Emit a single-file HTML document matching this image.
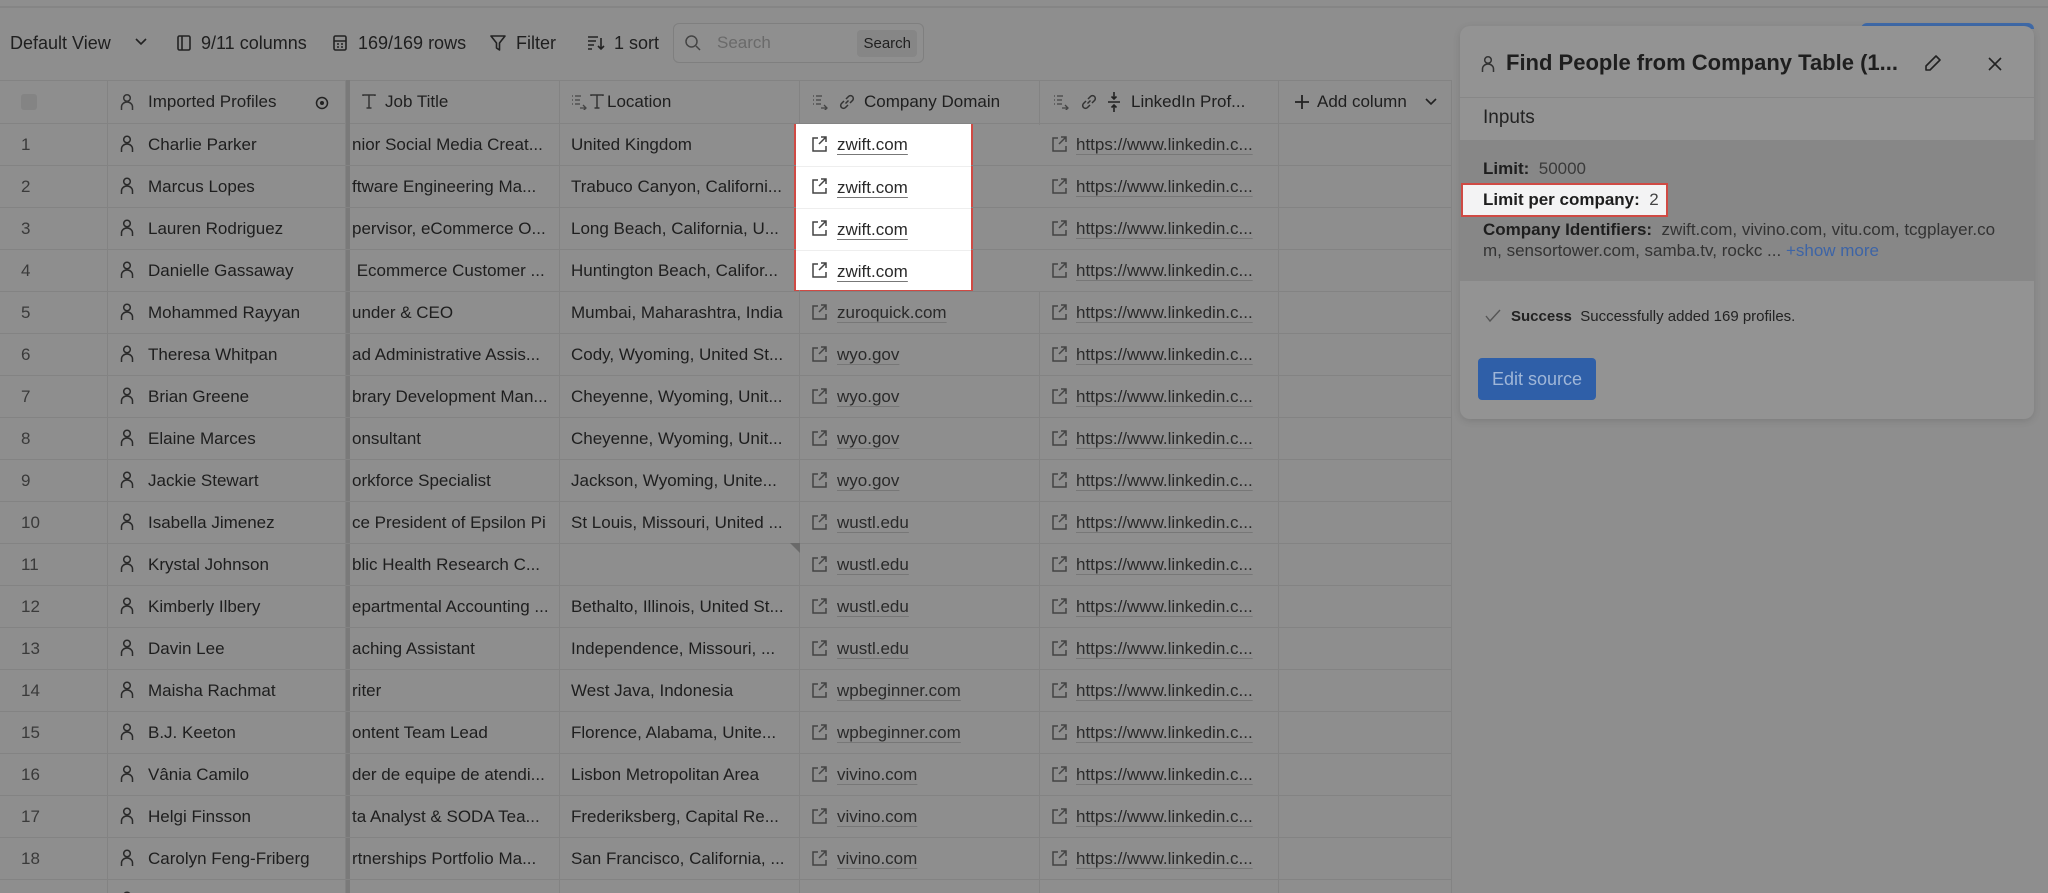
<!DOCTYPE html>
<html><head><meta charset="utf-8"><style>
*{box-sizing:border-box;margin:0;padding:0}
html,body{width:2048px;height:893px;overflow:hidden;background:#8e8e8e}
body{font-family:"Liberation Sans",sans-serif;color:#1e1e1e}
#wrap{position:relative;width:2048px;height:893px;overflow:hidden;background:#8e8e8e}
.abs{position:absolute}
.topline{left:0;top:6px;width:2048px;height:2px;background:#858585}
.tb{top:31px;height:24px;font-size:18px;display:flex;align-items:center;gap:8px;color:#1f1f1f}
.search{left:673px;top:23px;width:251px;height:40px;border:1px solid #7f7f7f;border-radius:6px;background:#8f8f8f}
.search .b{position:absolute;right:6px;top:6px;height:27px;padding:0 6px;background:#868686;border-radius:4px;font-size:15px;line-height:27px;color:#1f1f1f}
.row{position:absolute;left:0;width:1452px;height:42px;border-bottom:1px solid #838383;font-size:17px;white-space:nowrap}
.row>div{position:absolute;top:0;height:42px;line-height:41px;overflow:hidden;border-right:1px solid #838383}
.c0{left:0;width:108px;padding-left:21px;color:#3a3a3a}
.c1{left:108px;width:238px;padding-left:40px}
.c2{left:350px;width:210px;padding-left:2px}
.c3{left:560px;width:240px;padding-left:11px}
.c4{left:800px;width:240px;padding-left:37px}
.c5{left:1040px;width:239px;padding-left:36px}
.c6{left:1279px;width:173px}
.frz{left:346px;top:80px;width:4px;height:813px;background:#7a7a7a}
.lk{color:#2a2a2a;text-decoration:underline;text-decoration-color:#777;text-underline-offset:4px}
svg{position:absolute}
.hdr{font-size:17px;color:#1f1f1f}
.hl{left:794px;top:124px;width:179px;height:168px;background:#fff;border:2px solid #cf4a44}
.panel{left:1460px;top:26px;width:574px;height:393px;background:#939393;border-radius:10px;box-shadow:0 2px 8px rgba(0,0,0,.12)}
</style></head><body><div id="wrap">
<div class="abs topline"></div>
<div class="abs" style="left:1861px;top:23px;width:173px;height:6px;background:#3f6aa8;border-radius:6px 6px 0 0"></div>

<div class="abs tb" style="left:10px">Default View</div>
<svg style="left:134px;top:37px" width="14" height="10" viewBox="0 0 14 10"><path d="M2 2l5 5 5-5" fill="none" stroke="#222" stroke-width="1.6"/></svg>
<svg style="left:177px;top:35px" width="14" height="16" viewBox="0 0 14 16"><rect x="1" y="1" width="12" height="14" rx="1.5" fill="none" stroke="#222" stroke-width="1.6"/><path d="M5 1v14" stroke="#222" stroke-width="1.6"/></svg>
<div class="abs tb" style="left:201px">9/11 columns</div>
<svg style="left:333px;top:35px" width="14" height="16" viewBox="0 0 14 16"><rect x="1" y="1" width="12" height="14" rx="1.5" fill="none" stroke="#222" stroke-width="1.6"/><path d="M1 6h12M4 9h2M8 9h2M4 12h2M8 12h2" stroke="#222" stroke-width="1.6"/></svg>
<div class="abs tb" style="left:358px">169/169 rows</div>
<svg style="left:490px;top:35px" width="16" height="17" viewBox="0 0 16 17"><path d="M1 1h14l-5.5 7v7l-3-2V8z" fill="none" stroke="#222" stroke-width="1.6" stroke-linejoin="round"/></svg>
<div class="abs tb" style="left:516px">Filter</div>
<svg style="left:587px;top:35px" width="18" height="16" viewBox="0 0 18 16"><path d="M1 2h10M1 6h8M1 10h6M1 14h4M14 3v11M11 11l3 3 3-3" fill="none" stroke="#222" stroke-width="1.6"/></svg>
<div class="abs tb" style="left:614px">1 sort</div>
<div class="abs search"><svg style="left:10px;top:10px" width="18" height="18" viewBox="0 0 18 18"><circle cx="7.5" cy="7.5" r="5.5" fill="none" stroke="#444" stroke-width="1.5"/><path d="M12 12l4 4" stroke="#444" stroke-width="1.5"/></svg><span style="position:absolute;left:43px;top:9px;font-size:17px;color:#6a6a6a">Search</span><span class="b">Search</span></div>

<div class="row" style="top:80px;height:44px;border-top:1px solid #838383">
<div class="c0" style="height:44px"><span style="display:inline-block;width:16px;height:16px;background:#848484;border-radius:3px;margin-top:13px"></span></div>
<div class="c1 hdr" style="height:44px">Imported Profiles<svg style="left:207px;top:15px" width="14" height="14" viewBox="0 0 14 14"><circle cx="7" cy="7" r="5.5" fill="none" stroke="#222" stroke-width="1.5"/><circle cx="7" cy="7" r="2" fill="#222"/></svg></div>
<div class="c2 hdr" style="height:44px;padding-left:35px">Job Title</div>
<div class="c3 hdr" style="height:44px;padding-left:47px">Location</div>
<div class="c4 hdr" style="height:44px;padding-left:64px">Company Domain</div>
<div class="c5 hdr" style="height:44px;padding-left:91px">LinkedIn Prof...</div>
<div class="c6 hdr" style="height:44px;padding-left:38px">Add column</div>
</div>
<svg style="left:120px;top:93px" width="14" height="18" viewBox="0 0 14 18"><circle cx="7" cy="5" r="3.3" fill="none" stroke="#333" stroke-width="1.5"/><path d="M1.5 17v-3a5.5 5 0 0 1 11 0v3" fill="none" stroke="#333" stroke-width="1.5"/></svg>
<svg style="left:362px;top:94px" width="14" height="15" viewBox="0 0 14 15"><path d="M1 2V1h12v1M7 1v13M4.5 14h5" fill="none" stroke="#333" stroke-width="1.5"/></svg>
<svg style="left:571px;top:94px" width="16" height="16" viewBox="0 0 16 16"><path d="M1 2h1M1 6h1M1 10h1M4 2h6M4 6h5M4 10h5M9 14h6M12 11l3 3-3 3" fill="none" stroke="#444" stroke-width="1.3"/></svg>
<svg style="left:590px;top:94px" width="14" height="15" viewBox="0 0 14 15"><path d="M1 2V1h12v1M7 1v13M4.5 14h5" fill="none" stroke="#333" stroke-width="1.5"/></svg>
<svg style="left:812px;top:94px" width="16" height="16" viewBox="0 0 16 16"><path d="M1 2h1M1 6h1M1 10h1M4 2h6M4 6h5M4 10h5M9 14h6M12 11l3 3-3 3" fill="none" stroke="#444" stroke-width="1.3"/></svg>
<svg style="left:838px;top:93px" width="18" height="18" viewBox="0 0 18 18"><path d="M7.5 10.5l3-3M6 8l-2.5 2.5a2.8 2.8 0 0 0 4 4L10 12M12 10l2.5-2.5a2.8 2.8 0 0 0-4-4L8 6" fill="none" stroke="#333" stroke-width="1.5"/></svg>
<svg style="left:1053px;top:94px" width="16" height="16" viewBox="0 0 16 16"><path d="M1 2h1M1 6h1M1 10h1M4 2h6M4 6h5M4 10h5M9 14h6M12 11l3 3-3 3" fill="none" stroke="#444" stroke-width="1.3"/></svg>
<svg style="left:1080px;top:93px" width="18" height="18" viewBox="0 0 18 18"><path d="M7.5 10.5l3-3M6 8l-2.5 2.5a2.8 2.8 0 0 0 4 4L10 12M12 10l2.5-2.5a2.8 2.8 0 0 0-4-4L8 6" fill="none" stroke="#333" stroke-width="1.5"/></svg>
<svg style="left:1107px;top:91px" width="14" height="22" viewBox="0 0 14 22"><path d="M1 11h12M7 1v7M4.5 5.5L7 8l2.5-2.5M7 21v-7M4.5 16.5L7 14l2.5 2.5" fill="none" stroke="#222" stroke-width="1.6"/></svg>
<svg style="left:1294px;top:94px" width="16" height="16" viewBox="0 0 16 16"><path d="M8 1v14M1 8h14" stroke="#222" stroke-width="1.8"/></svg>
<svg style="left:1424px;top:97px" width="14" height="10" viewBox="0 0 14 10"><path d="M2 2l5 5 5-5" fill="none" stroke="#222" stroke-width="1.6"/></svg>

<div class="abs hl"></div>
<div class="abs frz"></div>

<div class="row" style="top:124px"><div class="c0">1</div><div class="c1">Charlie Parker</div><div class="c2">nior Social Media Creat...</div><div class="c3">United Kingdom</div><div class="c4" style="background:#fff;border-right:none;left:796px;width:175px;padding-left:41px"><span class="lk">zwift.com</span></div><div class="c5"><span class="lk">https://www.linkedin.c...</span></div><div class="c6"></div></div>
<div class="row" style="top:166px"><div class="c0">2</div><div class="c1">Marcus Lopes</div><div class="c2">ftware Engineering Ma...</div><div class="c3">Trabuco Canyon, Californi...</div><div class="c4" style="background:#fff;border-right:none;left:796px;width:175px;padding-left:41px;border-top:1px solid #eee"><span class="lk">zwift.com</span></div><div class="c5"><span class="lk">https://www.linkedin.c...</span></div><div class="c6"></div></div>
<div class="row" style="top:208px"><div class="c0">3</div><div class="c1">Lauren Rodriguez</div><div class="c2">pervisor, eCommerce O...</div><div class="c3">Long Beach, California, U...</div><div class="c4" style="background:#fff;border-right:none;left:796px;width:175px;padding-left:41px;border-top:1px solid #eee"><span class="lk">zwift.com</span></div><div class="c5"><span class="lk">https://www.linkedin.c...</span></div><div class="c6"></div></div>
<div class="row" style="top:250px"><div class="c0">4</div><div class="c1">Danielle Gassaway</div><div class="c2">&nbsp;Ecommerce Customer ...</div><div class="c3">Huntington Beach, Califor...</div><div class="c4" style="background:#fff;border-right:none;left:796px;width:175px;padding-left:41px;height:40px;border-top:1px solid #eee"><span class="lk">zwift.com</span></div><div class="c5"><span class="lk">https://www.linkedin.c...</span></div><div class="c6"></div></div>
<div class="row" style="top:292px"><div class="c0">5</div><div class="c1">Mohammed Rayyan</div><div class="c2">under &amp; CEO</div><div class="c3">Mumbai, Maharashtra, India</div><div class="c4"><span class="lk">zuroquick.com</span></div><div class="c5"><span class="lk">https://www.linkedin.c...</span></div><div class="c6"></div></div>
<div class="row" style="top:334px"><div class="c0">6</div><div class="c1">Theresa Whitpan</div><div class="c2">ad Administrative Assis...</div><div class="c3">Cody, Wyoming, United St...</div><div class="c4"><span class="lk">wyo.gov</span></div><div class="c5"><span class="lk">https://www.linkedin.c...</span></div><div class="c6"></div></div>
<div class="row" style="top:376px"><div class="c0">7</div><div class="c1">Brian Greene</div><div class="c2">brary Development Man...</div><div class="c3">Cheyenne, Wyoming, Unit...</div><div class="c4"><span class="lk">wyo.gov</span></div><div class="c5"><span class="lk">https://www.linkedin.c...</span></div><div class="c6"></div></div>
<div class="row" style="top:418px"><div class="c0">8</div><div class="c1">Elaine Marces</div><div class="c2">onsultant</div><div class="c3">Cheyenne, Wyoming, Unit...</div><div class="c4"><span class="lk">wyo.gov</span></div><div class="c5"><span class="lk">https://www.linkedin.c...</span></div><div class="c6"></div></div>
<div class="row" style="top:460px"><div class="c0">9</div><div class="c1">Jackie Stewart</div><div class="c2">orkforce Specialist</div><div class="c3">Jackson, Wyoming, Unite...</div><div class="c4"><span class="lk">wyo.gov</span></div><div class="c5"><span class="lk">https://www.linkedin.c...</span></div><div class="c6"></div></div>
<div class="row" style="top:502px"><div class="c0">10</div><div class="c1">Isabella Jimenez</div><div class="c2">ce President of Epsilon Pi</div><div class="c3">St Louis, Missouri, United ...</div><div class="c4"><span class="lk">wustl.edu</span></div><div class="c5"><span class="lk">https://www.linkedin.c...</span></div><div class="c6"></div></div>
<div class="row" style="top:544px"><div class="c0">11</div><div class="c1">Krystal Johnson</div><div class="c2">blic Health Research C...</div><div class="c3"></div><div class="c4"><span class="lk">wustl.edu</span></div><div class="c5"><span class="lk">https://www.linkedin.c...</span></div><div class="c6"></div></div>
<div class="row" style="top:586px"><div class="c0">12</div><div class="c1">Kimberly Ilbery</div><div class="c2">epartmental Accounting ...</div><div class="c3">Bethalto, Illinois, United St...</div><div class="c4"><span class="lk">wustl.edu</span></div><div class="c5"><span class="lk">https://www.linkedin.c...</span></div><div class="c6"></div></div>
<div class="row" style="top:628px"><div class="c0">13</div><div class="c1">Davin Lee</div><div class="c2">aching Assistant</div><div class="c3">Independence, Missouri, ...</div><div class="c4"><span class="lk">wustl.edu</span></div><div class="c5"><span class="lk">https://www.linkedin.c...</span></div><div class="c6"></div></div>
<div class="row" style="top:670px"><div class="c0">14</div><div class="c1">Maisha Rachmat</div><div class="c2">riter</div><div class="c3">West Java, Indonesia</div><div class="c4"><span class="lk">wpbeginner.com</span></div><div class="c5"><span class="lk">https://www.linkedin.c...</span></div><div class="c6"></div></div>
<div class="row" style="top:712px"><div class="c0">15</div><div class="c1">B.J. Keeton</div><div class="c2">ontent Team Lead</div><div class="c3">Florence, Alabama, Unite...</div><div class="c4"><span class="lk">wpbeginner.com</span></div><div class="c5"><span class="lk">https://www.linkedin.c...</span></div><div class="c6"></div></div>
<div class="row" style="top:754px"><div class="c0">16</div><div class="c1">Vânia Camilo</div><div class="c2">der de equipe de atendi...</div><div class="c3">Lisbon Metropolitan Area</div><div class="c4"><span class="lk">vivino.com</span></div><div class="c5"><span class="lk">https://www.linkedin.c...</span></div><div class="c6"></div></div>
<div class="row" style="top:796px"><div class="c0">17</div><div class="c1">Helgi Finsson</div><div class="c2">ta Analyst &amp; SODA Tea...</div><div class="c3">Frederiksberg, Capital Re...</div><div class="c4"><span class="lk">vivino.com</span></div><div class="c5"><span class="lk">https://www.linkedin.c...</span></div><div class="c6"></div></div>
<div class="row" style="top:838px"><div class="c0">18</div><div class="c1">Carolyn Feng-Friberg</div><div class="c2">rtnerships Portfolio Ma...</div><div class="c3">San Francisco, California, ...</div><div class="c4"><span class="lk">vivino.com</span></div><div class="c5"><span class="lk">https://www.linkedin.c...</span></div><div class="c6"></div></div>
<div class="row" style="top:880px"><div class="c0"></div><div class="c1"></div><div class="c2"></div><div class="c3"></div><div class="c4"></div><div class="c5"></div><div class="c6"></div></div>

<svg style="left:120px;top:135px;overflow:visible" width="14" height="800" viewBox="0 0 14 800">
<g fill="none" stroke="#2a2a2a" stroke-width="1.5">
<g id="p"><circle cx="7" cy="4.5" r="3.3"/><path d="M1.5 17v-3a5.5 5 0 0 1 11 0v3"/></g>
<use href="#p" y="42"/><use href="#p" y="84"/><use href="#p" y="126"/><use href="#p" y="168"/><use href="#p" y="210"/><use href="#p" y="252"/><use href="#p" y="294"/><use href="#p" y="336"/><use href="#p" y="378"/><use href="#p" y="420"/><use href="#p" y="462"/><use href="#p" y="504"/><use href="#p" y="546"/><use href="#p" y="588"/><use href="#p" y="630"/><use href="#p" y="672"/><use href="#p" y="714"/><use href="#p" y="756"/>
</g></svg>
<svg style="left:811px;top:136px;overflow:visible" width="16" height="760" viewBox="0 0 16 760">
<g fill="none" stroke="#444" stroke-width="1.5">
<g id="e"><path d="M7 2H2v13h13v-5M10 1h5v5M15 1L8 8"/></g>
<use href="#e" y="42"/><use href="#e" y="84"/><use href="#e" y="126"/><use href="#e" y="168"/><use href="#e" y="210"/><use href="#e" y="252"/><use href="#e" y="294"/><use href="#e" y="336"/><use href="#e" y="378"/><use href="#e" y="420"/><use href="#e" y="462"/><use href="#e" y="504"/><use href="#e" y="546"/><use href="#e" y="588"/><use href="#e" y="630"/><use href="#e" y="672"/><use href="#e" y="714"/>
</g></svg>
<svg style="left:1051px;top:136px;overflow:visible" width="16" height="760" viewBox="0 0 16 760">
<g fill="none" stroke="#444" stroke-width="1.5">
<use href="#e"/><use href="#e" y="42"/><use href="#e" y="84"/><use href="#e" y="126"/><use href="#e" y="168"/><use href="#e" y="210"/><use href="#e" y="252"/><use href="#e" y="294"/><use href="#e" y="336"/><use href="#e" y="378"/><use href="#e" y="420"/><use href="#e" y="462"/><use href="#e" y="504"/><use href="#e" y="546"/><use href="#e" y="588"/><use href="#e" y="630"/><use href="#e" y="672"/><use href="#e" y="714"/>
</g></svg>
<svg style="left:790px;top:543px" width="10" height="10"><path d="M0 0h10v10z" fill="#6a6a6a"/></svg>

<div class="abs panel">
 <svg style="left:21px;top:29px" width="14" height="18" viewBox="0 0 14 18"><circle cx="7" cy="5" r="3.3" fill="none" stroke="#333" stroke-width="1.5"/><path d="M1.5 17v-3a5.5 5 0 0 1 11 0v3" fill="none" stroke="#333" stroke-width="1.5"/></svg>
 <div style="position:absolute;left:46px;top:24px;font-size:22px;font-weight:bold;color:#1e1e1e">Find People from Company Table (1...</div>
 <svg style="left:464px;top:28px" width="18" height="18" viewBox="0 0 18 18"><path d="M12 2l4 4L6 16H2v-4z" fill="none" stroke="#222" stroke-width="1.6" stroke-linejoin="round"/></svg>
 <svg style="left:528px;top:31px" width="14" height="14" viewBox="0 0 14 14"><path d="M1 1l12 12M13 1L1 13" stroke="#222" stroke-width="1.6"/></svg>
 <div style="position:absolute;left:0;top:71px;width:574px;height:1px;background:#878787"></div>
 <div style="position:absolute;left:23px;top:81px;font-size:19px;color:#222">Inputs</div>
 <div style="position:absolute;left:0;top:114px;width:574px;height:141px;background:#878787"></div>
 <div style="position:absolute;left:23px;top:133px;font-size:17px"><b style="font-weight:600">Limit:</b> <span style="color:#3a3a3a">&nbsp;50000</span></div>
 <div style="position:absolute;left:1px;top:157px;width:207px;height:34px;background:#f3f3f4;border:2px solid #cf4a44"></div>
 <div style="position:absolute;left:23px;top:164px;font-size:17px;color:#1e1e1e"><b style="font-weight:600">Limit per company:</b> <span style="color:#444">&nbsp;2</span></div>
 <div style="position:absolute;left:23px;top:193px;width:526px;font-size:17px;line-height:21px;color:#333;word-break:break-all"><b style="font-weight:600;color:#1e1e1e">Company Identifiers:</b>&nbsp; zwift.com, vivino.com, vitu.com, tcgplayer.com, sensortower.com, samba.tv, rockc ... <span style="color:#3d64a6">+show more</span></div>
 <svg style="left:25px;top:283px" width="16" height="14" viewBox="0 0 16 14"><path d="M1 7l4 5L15 1" fill="none" stroke="#555" stroke-width="1.4"/></svg>
 <div style="position:absolute;left:51px;top:282px;font-size:15px;color:#222"><b>Success</b>&nbsp; Successfully added 169 profiles.</div>
 <div style="position:absolute;left:18px;top:332px;width:118px;height:42px;background:#2f5fa8;border-radius:4px;color:#9fb6d8;font-size:18px;line-height:42px;text-align:center">Edit source</div>
</div>
</div></body></html>
